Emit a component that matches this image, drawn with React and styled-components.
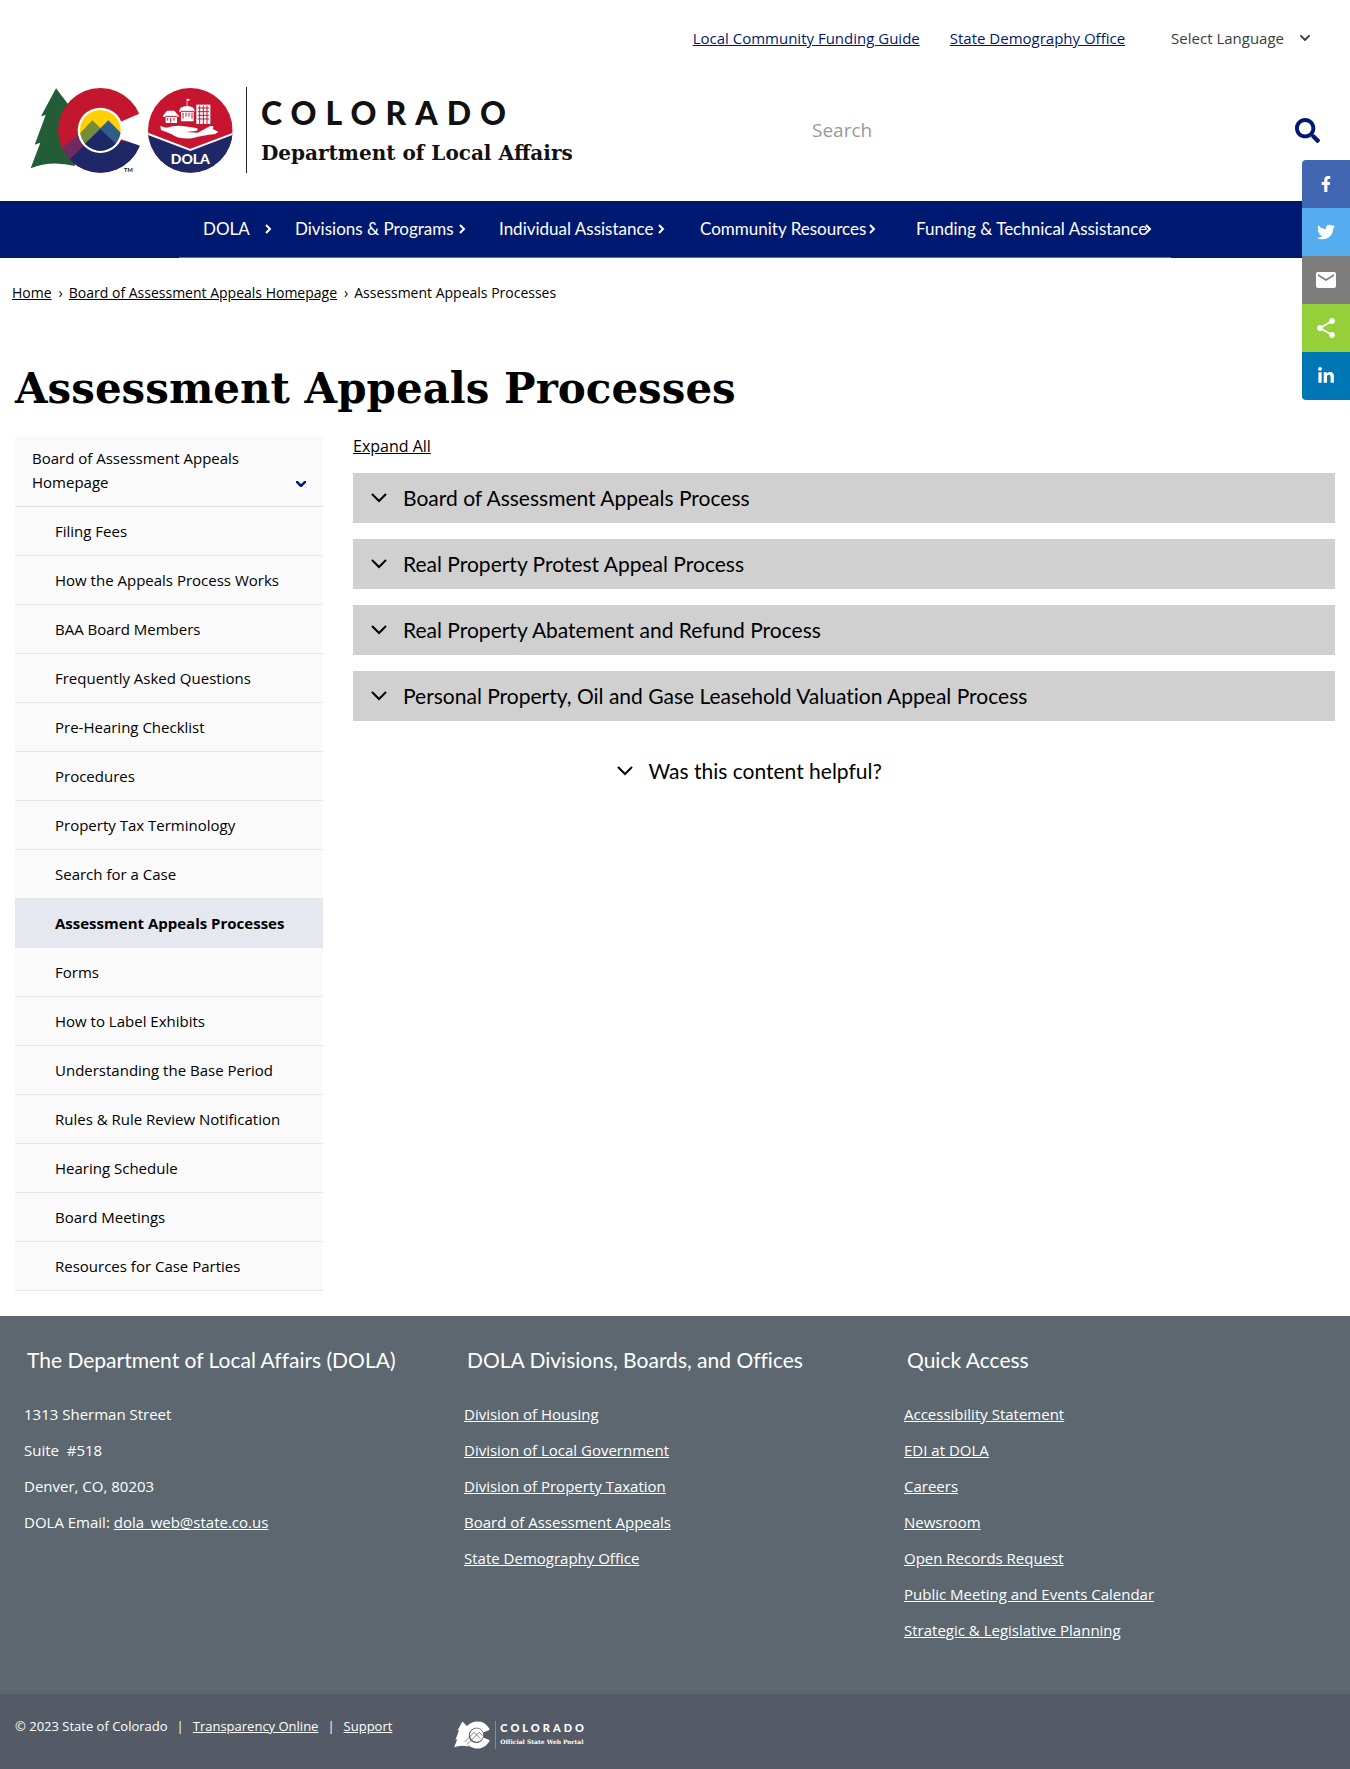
import React from "react";
import styled, { createGlobalStyle } from "styled-components";
import { FaFacebookF, FaLinkedinIn, FaSearch, FaTwitter } from "react-icons/fa";
import { MdEmail, MdShare } from "react-icons/md";

const body = `"Trebuchet MS", "Open Sans", sans-serif`;
const sans = `"Museo Sans", Lato, "Open Sans", sans-serif`;
const slab = `"Museo Slab", "DejaVu Serif", serif`;
const navy = "#001970";

const GlobalStyle = createGlobalStyle`
  *, *::before, *::after { box-sizing: border-box; }
  body { margin: 0; background: #fff; color: #000; font: 15px/24px ${body}; font-variant-ligatures: none; }
  ul, ol { list-style: none; margin: 0; padding: 0; }
  h1, h2, h3, p { margin: 0; }
  a { color: inherit; }
  button, input, select { font: inherit; color: inherit; border: 0; background: none; padding: 0; margin: 0; }
  button { cursor: pointer; }
`;

/* ---------- header ---------- */

const TopBar = styled.div`
  display: flex;
  justify-content: flex-end;
  align-items: center;
  gap: 30px;
  padding: 26px 40px 0 30px;
`;

const TopLink = styled.a`
  color: ${navy};
`;

const Language = styled.label`
  display: flex;
  align-items: center;
  gap: 16px;
  margin-left: 16px;
  color: #3c3c3c;
`;

const LanguageSelect = styled.select`
  appearance: none;
  field-sizing: content;
`;

const Masthead = styled.div`
  display: flex;
  justify-content: space-between;
  align-items: center;
  padding: 36px 30px 27px;
`;

const Brand = styled.a`
  display: flex;
  align-items: center;
  text-decoration: none;
  color: #111;
`;

const BrandText = styled.span`
  display: flex;
  flex-direction: column;
  justify-content: center;
  gap: 6px;
  height: 86px;
  margin-left: 12px;
  padding: 4px 0 0 14px;
  border-left: 1px solid #222;
`;

const BrandState = styled.span`
  font: 900 32px/36px Lato, sans-serif;
  letter-spacing: 9px;
`;

const BrandName = styled.span`
  font: bold 20px/32px ${slab};
`;

const SearchForm = styled.form`
  display: flex;
  align-items: center;
  width: 40%;
  padding-left: 8px;
`;

const SearchInput = styled.input`
  flex: 1;
  min-width: 0;
  height: 40px;
  font-size: 19px;
  outline: 0;
  &::placeholder { color: #999; opacity: 1; }
`;

const SearchButton = styled.button`
  display: flex;
  color: ${navy};
  font-size: 25px;
`;

const NavBar = styled.nav`
  background: ${navy};
  height: 57px;
  display: flex;
  justify-content: center;
`;

const NavList = styled.ul`
  display: grid;
  grid-template-columns: 92px 204px 201px 216px 1fr;
  align-items: center;
  width: 992px;
  padding-left: 24px;
  border-bottom: 1px solid #5a6fae;
`;

const NavLink = styled.a`
  display: inline-flex;
  align-items: center;
  color: #fff;
  font: 17px/24px ${sans};
  font-variant-ligatures: none;
  text-decoration: none;
  white-space: nowrap;
  & > svg { margin-left: ${(p) => p.$gap}px; }
`;

/* ---------- page ---------- */

const Crumbs = styled.ol`
  display: flex;
  gap: 7px;
  padding: 23px 12px 24px;
  font-size: 14px;
  line-height: 24px;
`;

const Crumb = styled.li`
  display: flex;
  gap: 6px;
  & + &::before { content: "›"; }
`;

const Title = styled.h1`
  padding: 32px 15px 14px;
  font: bold 42px/56px ${slab};
`;

const Columns = styled.div`
  display: grid;
  grid-template-columns: 308px 1fr;
  gap: 30px;
  align-items: start;
  padding: 5px 15px 25px;
`;

const SideNav = styled.nav`
  background: #fafafa;
`;

const SideParent = styled.a`
  display: flex;
  align-items: flex-end;
  justify-content: space-between;
  padding: 10px 17px 12px;
  border-bottom: 1px solid #e0e0e0;
  text-decoration: none;
  color: #000;
  & > span { max-width: 230px; }
  & > svg { margin-bottom: 7px; color: ${navy}; }
`;

const SideLink = styled.a`
  display: block;
  padding: 12px 16px 12px 40px;
  border-bottom: 1px solid #e6e6e6;
  background: ${(p) => (p.$active ? "#e6e8ef" : "transparent")};
  font-weight: ${(p) => (p.$active ? "bold" : "normal")};
  text-decoration: none;
  white-space: nowrap;
`;

const ExpandAll = styled.button`
  display: block;
  margin: -2px 0 15px;
  font-size: 16px;
  text-decoration: underline;
`;

const AccordionList = styled.div`
  display: grid;
  gap: 16px;
`;

const AccordionButton = styled.button`
  display: flex;
  align-items: center;
  gap: 16px;
  width: 100%;
  height: 50px;
  padding: 0 18px;
  background: ${(p) => (p.$plain ? "transparent" : "#d0d0d0")};
  font: 21px/26px ${sans};
  font-variant-ligatures: none;
  text-align: left;
`;

const Feedback = styled.div`
  width: 50%;
  margin: 25px auto 0;
`;

/* ---------- share rail ---------- */

const ShareRail = styled.div`
  position: fixed;
  top: 160px;
  right: 0;
  display: flex;
  flex-direction: column;
  border-radius: 4px 0 0 4px;
  overflow: hidden;
`;

const ShareLink = styled.a`
  display: flex;
  align-items: center;
  justify-content: center;
  width: 48px;
  height: 48px;
  background: ${(p) => p.$color};
  color: #fff;
  font-size: ${(p) => p.$size}px;
`;

/* ---------- footer ---------- */

const FooterMain = styled.div`
  display: grid;
  grid-template-columns: repeat(3, 1fr);
  padding: 26px 6px 52px 24px;
  background: #5c6770;
  color: #fff;
`;

const FooterHeading = styled.h3`
  padding: 4px 3px;
  margin-bottom: 24px;
  font: 21px/28px ${sans};
  font-variant-ligatures: none;
`;

const FooterList = styled.ul`
  display: grid;
  gap: 12px;
`;

const FooterBottom = styled.div`
  display: flex;
  align-items: flex-start;
  gap: 62px;
  min-height: 76px;
  padding: 20px 15px;
  background: #545b66;
  color: #fff;
  font-size: 13px;
`;

const Legal = styled.p`
  display: flex;
  gap: 9px;
`;

const Portal = styled.a`
  display: flex;
  align-items: center;
  margin-top: 6px;
  color: #fff;
  text-decoration: none;
`;

const PortalText = styled.span`
  display: flex;
  flex-direction: column;
  margin-left: 5px;
  padding-left: 4px;
  border-left: 1px solid #858b94;
`;

const PortalState = styled.span`
  font: 900 11px/14px Lato, sans-serif;
  letter-spacing: 3px;
`;

const PortalName = styled.span`
  font: bold 6px/14px ${slab};
`;

/* ---------- drawings ---------- */

function Chevron({ width = 16, stroke = 2, right = false }) {
  return right ? (
    <svg width="7" height="10" viewBox="0 0 7 10" fill="none" stroke="currentColor" strokeWidth="2" aria-hidden="true">
      <path d="M1 1l4 4-4 4" />
    </svg>
  ) : (
    <svg width={width} height={width * 0.625} viewBox="0 0 16 10" fill="none" stroke="currentColor" strokeWidth={stroke} strokeLinecap="round" aria-hidden="true">
      <path d="M1.500 1.500l6.500 6.500 6.500-6.500" />
    </svg>
  );
}

function StateLogo() {
  return (
    <svg width="204" height="88" viewBox="30 18 612 264" role="img" aria-label="Colorado DOLA">
      <defs>
        <clipPath id="outer"><circle cx="241" cy="151" r="127" /></clipPath>
        <clipPath id="inner"><circle cx="241" cy="151" r="61" /></clipPath>
        <clipPath id="seal"><circle cx="511" cy="151" r="127" /></clipPath>
      </defs>
      <path d="M108 25L63 109l14-4-33 89 17-6-29 77q60-25 133-7V100z" fill="#235d38" />
      <path d="M108 25L142 92L120 120z" fill="#235d38" />
      <g clipPath="url(#outer)">
        <rect x="110" y="20" width="262" height="262" fill="#c3172f" />
        <path d="M110 218L185 155l25 30-55 53-40-5z" fill="#6d2b62" />
        <path d="M125 262l117-114 50 36h90v100H120z" fill="#1f2866" />
      </g>
      <path d="M299 127l57-25 18-8v114l-18-12-57-20z" fill="#fff" />
      <circle cx="241" cy="151" r="68" fill="#fff" />
      <g clipPath="url(#inner)">
        <rect x="175" y="85" width="132" height="132" fill="#ffd100" />
        <path d="M217 121l-55 58v45h100v-60z" fill="#768b38" />
        <path d="M265 121l-50 50v50h110v-40z" fill="#2f5d86" />
        <path d="M241 148l-75 70h150z" fill="#1f2866" />
      </g>
      <text x="312" y="277" fontFamily="Lato, sans-serif" fontSize="17" fontWeight="bold" fill="#111">TM</text>
      <g clipPath="url(#seal)">
        <rect x="384" y="24" width="254" height="254" fill="#c8152f" />
        <path d="M380 160l131 50 131-50v122H380z" fill="#1f2866" />
        <path d="M380 160l131 50 131-50" fill="none" stroke="#fff" strokeWidth="6" />
      </g>
      <g fill="#fff">
        <path d="M421 138l18 5q28-8 48-5l42 6q10 6-2 9l-30 3 36 2 38-20q14-2 7 9l17 8-9 7q-40 4-66 12-42 6-66-12l-31-12z" />
        <path d="M429 107l12-15h22l13 15v4h-5v18h-34v-18h-8z" />
        <path d="M478 92q2-13 22-14V56h2l10 3-10 5v14q20 1 22 14v3h-3v29h-38V95h-5z" />
        <path d="M529 74h42v58h-42z" />
      </g>
      <g stroke="#c8152f" strokeWidth="3" fill="none">
        <path d="M533 84h34M533 95h34M533 106h34M533 117h34M539 77v55M550 77v55M561 77v55" />
        <path d="M489 98v18M498 98v12M507 98v12M516 98v18M483 94h40" />
        <path d="M443 114v8M452 114v14M462 114v8M436 109h36" />
      </g>
      <text x="511" y="251" textAnchor="middle" fontFamily="Lato, sans-serif" fontSize="42" fontWeight="900" fill="#fff">DOLA</text>
    </svg>
  );
}

function PortalLogo() {
  return (
    <svg width="36" height="30" viewBox="30 18 336 264" role="img" aria-label="Colorado">
      <path d="M108 25L63 109l14-4-33 89 17-6-29 77q60-25 133-7V80z" fill="#fff" />
      <path d="M364 100A127 127 0 1 0 364 200L303 173A69 69 0 1 1 300 129z" fill="#fff" />
      <circle cx="241" cy="151" r="66" fill="#fff" stroke="#545b66" strokeWidth="7" />
      <path d="M130 215l87-90 60 60M150 240l115-115 32 32" fill="none" stroke="#545b66" strokeWidth="7" />
    </svg>
  );
}

/* ---------- content ---------- */

const navItems = [
  { label: "DOLA", gap: 15 },
  { label: "Divisions & Programs", gap: 5 },
  { label: "Individual Assistance", gap: 5 },
  { label: "Community Resources", gap: 3 },
  { label: "Funding & Technical Assistance", gap: -2 },
];

const sideItems = [
  "Filing Fees",
  "How the Appeals Process Works",
  "BAA Board Members",
  "Frequently Asked Questions",
  "Pre-Hearing Checklist",
  "Procedures",
  "Property Tax Terminology",
  "Search for a Case",
  "Assessment Appeals Processes",
  "Forms",
  "How to Label Exhibits",
  "Understanding the Base Period",
  "Rules & Rule Review Notification",
  "Hearing Schedule",
  "Board Meetings",
  "Resources for Case Parties",
];

const processes = [
  "Board of Assessment Appeals Process",
  "Real Property Protest Appeal Process",
  "Real Property Abatement and Refund Process",
  "Personal Property, Oil and Gase Leasehold Valuation Appeal Process",
];

const divisions = [
  "Division of Housing",
  "Division of Local Government",
  "Division of Property Taxation",
  "Board of Assessment Appeals",
  "State Demography Office",
];

const quickLinks = [
  "Accessibility Statement",
  "EDI at DOLA",
  "Careers",
  "Newsroom",
  "Open Records Request",
  "Public Meeting and Events Calendar",
  "Strategic & Legislative Planning",
];

const shares = [
  { name: "Facebook", color: "#4267b2", Icon: FaFacebookF, size: 16 },
  { name: "Twitter", color: "#55acee", Icon: FaTwitter, size: 18 },
  { name: "Email", color: "#7d7d7d", Icon: MdEmail, size: 24 },
  { name: "Share", color: "#95d03a", Icon: MdShare, size: 24 },
  { name: "LinkedIn", color: "#0077b5", Icon: FaLinkedinIn, size: 18 },
];

function LinkColumn({ title, links }) {
  return (
    <section>
      <FooterHeading>{title}</FooterHeading>
      <FooterList>
        {links.map((text) => (
          <li key={text}><a href="#">{text}</a></li>
        ))}
      </FooterList>
    </section>
  );
}

export default function App() {
  return (
    <>
      <GlobalStyle />
      <header>
        <TopBar>
          <TopLink href="#">Local Community Funding Guide</TopLink>
          <TopLink href="#">State Demography Office</TopLink>
          <Language>
            <LanguageSelect aria-label="Select Language">
              <option>Select Language</option>
            </LanguageSelect>
            <Chevron width={10} stroke={3} />
          </Language>
        </TopBar>
        <Masthead>
          <Brand href="#">
            <StateLogo />
            <BrandText>
              <BrandState>COLORADO</BrandState>
              <BrandName>Department of Local Affairs</BrandName>
            </BrandText>
          </Brand>
          <SearchForm role="search">
            <SearchInput type="search" placeholder="Search" aria-label="Search" />
            <SearchButton type="button" aria-label="Search"><FaSearch /></SearchButton>
          </SearchForm>
        </Masthead>
        <NavBar>
          <NavList>
            {navItems.map((item) => (
              <li key={item.label}>
                <NavLink href="#" $gap={item.gap}>
                  {item.label}
                  <Chevron right />
                </NavLink>
              </li>
            ))}
          </NavList>
        </NavBar>
      </header>

      <Crumbs>
        <Crumb><a href="#">Home</a></Crumb>
        <Crumb><a href="#">Board of Assessment Appeals Homepage</a></Crumb>
        <Crumb>Assessment Appeals Processes</Crumb>
      </Crumbs>
      <Title>Assessment Appeals Processes</Title>

      <Columns>
        <SideNav>
          <SideParent href="#">
            <span>Board of Assessment Appeals Homepage</span>
            <Chevron width={10} stroke={4} />
          </SideParent>
          <ul>
            {sideItems.map((text) => (
              <li key={text}>
                <SideLink href="#" $active={text === "Assessment Appeals Processes"}>{text}</SideLink>
              </li>
            ))}
          </ul>
        </SideNav>
        <main>
          <ExpandAll type="button">Expand All</ExpandAll>
          <AccordionList>
            {processes.map((text) => (
              <AccordionButton key={text} type="button">
                <Chevron />
                {text}
              </AccordionButton>
            ))}
          </AccordionList>
          <Feedback>
            <AccordionButton type="button" $plain>
              <Chevron />
              Was this content helpful?
            </AccordionButton>
          </Feedback>
        </main>
      </Columns>

      <footer>
        <FooterMain>
          <section>
            <FooterHeading>The Department of Local Affairs (DOLA)</FooterHeading>
            <FooterList>
              <li>1313 Sherman Street</li>
              <li>Suite &nbsp;#518</li>
              <li>Denver, CO, 80203</li>
              <li>DOLA Email: <a href="#">dola_web@state.co.us</a></li>
            </FooterList>
          </section>
          <LinkColumn title="DOLA Divisions, Boards, and Offices" links={divisions} />
          <LinkColumn title="Quick Access" links={quickLinks} />
        </FooterMain>
        <FooterBottom>
          <Legal>
            <span>© 2023 State of Colorado</span>
            <span>|</span>
            <a href="#">Transparency Online</a>
            <span>|</span>
            <a href="#">Support</a>
          </Legal>
          <Portal href="#">
            <PortalLogo />
            <PortalText>
              <PortalState>COLORADO</PortalState>
              <PortalName>Official State Web Portal</PortalName>
            </PortalText>
          </Portal>
        </FooterBottom>
      </footer>

      <ShareRail>
        {shares.map(({ name, color, Icon, size }) => (
          <ShareLink key={name} href="#" aria-label={name} $color={color} $size={size}>
            <Icon />
          </ShareLink>
        ))}
      </ShareRail>
    </>
  );
}
